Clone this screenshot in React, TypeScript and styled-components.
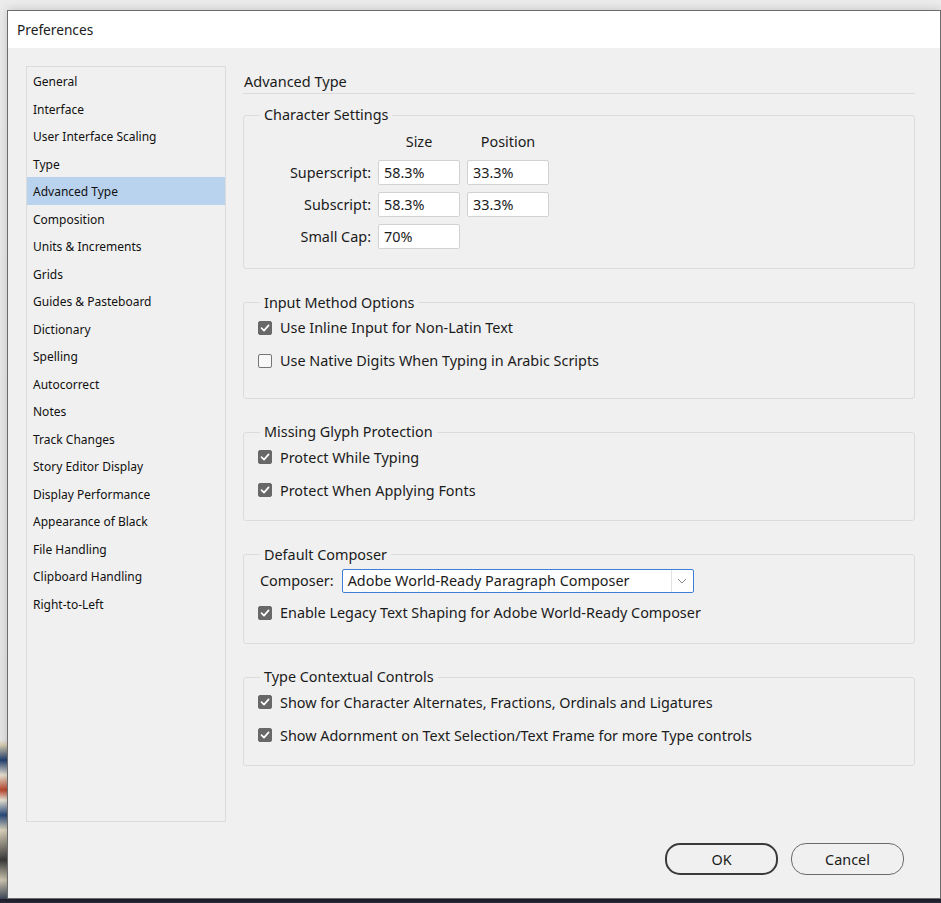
import React from "react";
import styled, { createGlobalStyle } from "styled-components";

const GlobalStyle = createGlobalStyle`
  html, body {
    margin: 0;
    padding: 0;
    background: #e9e9e9;
  }
  * {
    box-sizing: border-box;
  }
`;

const FONT = `"Noto Sans", "Open Sans", sans-serif`;
const TEXT = "14.4px";

const Screen = styled.div`
  width: 941px;
  height: 903px;
  padding: 10px 0 0 7px;
  overflow: hidden;
  background:
    linear-gradient(to bottom, transparent 899px, #1d1b2a 899px, #2a2d3a 903px),
    linear-gradient(
      to bottom,
      #ececec 0px,
      #e6e6e6 740px,
      #d9cdb0 745px,
      #21406f 760px,
      #e8e2d2 775px,
      #b9472f 790px,
      #e9e4d6 800px,
      #294a7a 815px,
      #dcd3bd 830px,
      #3a3a3a 860px,
      #cfc7b3 880px,
      #1f2b45 903px
    );
  font-family: ${FONT};
  color: #1b1b1b;
`;

const Dialog = styled.div`
  width: 934px;
  height: 889px;
  border: 1px solid #6c6c6c;
  display: flex;
  flex-direction: column;
  box-shadow: 0 0 10px rgba(0, 0, 0, 0.18);
  background: #f0f0f0;
`;

const TitleBar = styled.div`
  height: 37px;
  background: #ffffff;
  display: flex;
  align-items: center;
  padding-left: 9px;
  font-size: 13.7px;
  color: #1b1b1b;
`;

const Body = styled.div`
  flex: 1;
  padding: 18px 24px 0 18px;
  display: flex;
  flex-direction: column;
`;

const Columns = styled.div`
  display: grid;
  grid-template-columns: 200px 672px;
  column-gap: 17px;
`;

const Sidebar = styled.ul`
  list-style: none;
  margin: 0;
  padding: 0;
  height: 756px;
  border: 1px solid #dcdcdc;
`;

const NavItem = styled.li<{ $active?: boolean }>`
  height: 27.5px;
  display: flex;
  align-items: center;
  padding: 2px 0 0 6px;
  font-size: 12px;
  color: #111;
  background: ${(p) => (p.$active ? "#b9d3ee" : "transparent")};
`;

const Main = styled.div`
  display: flex;
  flex-direction: column;
`;

const Heading = styled.div`
  padding: 5px 0 2px 1px;
  line-height: 20px;
  font-size: 14.5px;
  border-bottom: 1px solid #dcdcdc;
`;

const Group = styled.fieldset<{ $first?: boolean; $bottom?: number }>`
  margin: ${(p) => (p.$first ? "11px" : "23.5px")} 0 0 0;
  padding: 4px 0 ${(p) => p.$bottom ?? 19}px 14px;
  border: 1px solid #dcdcdc;
  border-radius: 3px;
  min-width: 0;
`;

const Legend = styled.legend`
  margin-left: 2px;
  padding: 0 4px;
  line-height: 20px;
  font-size: ${TEXT};
`;

const CharGrid = styled.div`
  display: grid;
  grid-template-columns: 113px 82px 82px;
  column-gap: 7px;
  row-gap: 7px;
  align-items: center;
`;

const ColHead = styled.div`
  text-align: center;
  line-height: 20px;
  font-size: ${TEXT};
  margin-top: 3px;
  margin-bottom: 1px;
`;

const FieldLabel = styled.div`
  text-align: right;
  font-size: ${TEXT};
`;

const TextBox = styled.div`
  height: 25px;
  background: #ffffff;
  border: 1px solid #d2d2d2;
  border-radius: 2px;
  padding: 0 5px;
  display: flex;
  align-items: center;
  font-size: ${TEXT};
`;

const CheckRow = styled.label`
  display: flex;
  align-items: center;
  gap: 8px;
  height: 22px;
  font-size: ${TEXT};
  & + & {
    margin-top: 11px;
  }
`;

const Box = styled.span<{ $checked?: boolean }>`
  width: 14px;
  height: 14px;
  border-radius: 2px;
  flex: none;
  display: flex;
  align-items: center;
  justify-content: center;
  background: ${(p) => (p.$checked ? "#686868" : "#f7f7f7")};
  border: 1px solid ${(p) => (p.$checked ? "#686868" : "#757575")};
`;

const ComposerRow = styled.div`
  display: flex;
  align-items: center;
  gap: 8px;
  padding-left: 2px;
  margin-bottom: 9px;
  font-size: ${TEXT};
`;

const Select = styled.div`
  width: 352px;
  height: 24px;
  background: #ffffff;
  border: 1px solid #3d7fd6;
  border-radius: 2px;
  display: flex;
  align-items: stretch;
  font-size: ${TEXT};
`;

const SelectValue = styled.div`
  flex: 1;
  display: flex;
  align-items: center;
  padding-left: 5px;
`;

const SelectArrow = styled.div`
  width: 22px;
  border-left: 1px solid #e2e2e2;
  display: flex;
  align-items: center;
  justify-content: center;
`;

const Footer = styled.div`
  margin-top: 21px;
  padding-right: 12px;
  display: flex;
  justify-content: flex-end;
  gap: 13px;
`;

const Button = styled.button<{ $primary?: boolean }>`
  width: 113px;
  height: 32px;
  border-radius: 15px;
  background: #f0f0f0;
  border: ${(p) => (p.$primary ? "2px solid #3a3a3a" : "1px solid #6a6a6a")};
  font-family: ${FONT};
  font-size: ${TEXT};
  color: #1b1b1b;
  padding: 0;
`;

const Check = ({ checked }: { checked?: boolean }) => (
  <Box $checked={checked}>
    {checked && (
      <svg width="10" height="10" viewBox="0 0 10 10">
        <polyline
          points="1.5,5.2 4,7.6 8.6,2.4"
          fill="none"
          stroke="#ffffff"
          strokeWidth="1.7"
          strokeLinecap="round"
          strokeLinejoin="round"
        />
      </svg>
    )}
  </Box>
);

const navItems = [
  "General",
  "Interface",
  "User Interface Scaling",
  "Type",
  "Advanced Type",
  "Composition",
  "Units & Increments",
  "Grids",
  "Guides & Pasteboard",
  "Dictionary",
  "Spelling",
  "Autocorrect",
  "Notes",
  "Track Changes",
  "Story Editor Display",
  "Display Performance",
  "Appearance of Black",
  "File Handling",
  "Clipboard Handling",
  "Right-to-Left",
];

export default function App() {
  return (
    <Screen>
      <GlobalStyle />
      <Dialog>
        <TitleBar>Preferences</TitleBar>
        <Body>
          <Columns>
            <Sidebar>
              {navItems.map((item) => (
                <NavItem key={item} $active={item === "Advanced Type"}>
                  {item}
                </NavItem>
              ))}
            </Sidebar>
            <Main>
              <Heading>Advanced Type</Heading>

              <Group $first>
                <Legend>Character Settings</Legend>
                <CharGrid>
                  <span />
                  <ColHead>Size</ColHead>
                  <ColHead>Position</ColHead>
                  <FieldLabel>Superscript:</FieldLabel>
                  <TextBox>58.3%</TextBox>
                  <TextBox>33.3%</TextBox>
                  <FieldLabel>Subscript:</FieldLabel>
                  <TextBox>58.3%</TextBox>
                  <TextBox>33.3%</TextBox>
                  <FieldLabel>Small Cap:</FieldLabel>
                  <TextBox>70%</TextBox>
                </CharGrid>
              </Group>

              <Group $bottom={26}>
                <Legend>Input Method Options</Legend>
                <CheckRow>
                  <Check checked />
                  Use Inline Input for Non-Latin Text
                </CheckRow>
                <CheckRow>
                  <Check />
                  Use Native Digits When Typing in Arabic Scripts
                </CheckRow>
              </Group>

              <Group>
                <Legend>Missing Glyph Protection</Legend>
                <CheckRow>
                  <Check checked />
                  Protect While Typing
                </CheckRow>
                <CheckRow>
                  <Check checked />
                  Protect When Applying Fonts
                </CheckRow>
              </Group>

              <Group>
                <Legend>Default Composer</Legend>
                <ComposerRow>
                  Composer:
                  <Select>
                    <SelectValue>Adobe World-Ready Paragraph Composer</SelectValue>
                    <SelectArrow>
                      <svg width="10" height="6" viewBox="0 0 10 6">
                        <polyline
                          points="1,1 5,5 9,1"
                          fill="none"
                          stroke="#8a8a8a"
                          strokeWidth="1"
                        />
                      </svg>
                    </SelectArrow>
                  </Select>
                </ComposerRow>
                <CheckRow>
                  <Check checked />
                  Enable Legacy Text Shaping for Adobe World-Ready Composer
                </CheckRow>
              </Group>

              <Group>
                <Legend>Type Contextual Controls</Legend>
                <CheckRow>
                  <Check checked />
                  Show for Character Alternates, Fractions, Ordinals and Ligatures
                </CheckRow>
                <CheckRow>
                  <Check checked />
                  Show Adornment on Text Selection/Text Frame for more Type controls
                </CheckRow>
              </Group>
            </Main>
          </Columns>
          <Footer>
            <Button $primary>OK</Button>
            <Button>Cancel</Button>
          </Footer>
        </Body>
      </Dialog>
    </Screen>
  );
}
